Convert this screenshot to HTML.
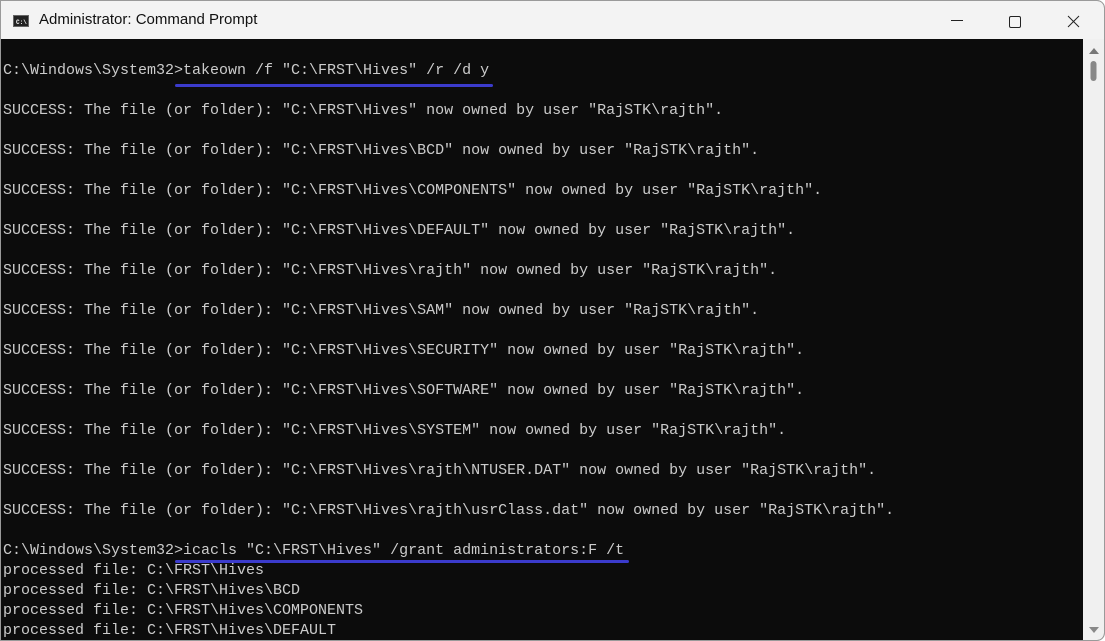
<!DOCTYPE html>
<html><head><style>
html,body{margin:0;padding:0;width:1105px;height:641px;overflow:hidden;background:#fff}
.win{position:absolute;left:0;top:0;width:1103px;height:639px;border:1px solid #9a9a9a;border-radius:0 8px 8px 0;background:#0c0c0c;overflow:hidden}
.title{position:absolute;left:0;top:0;width:1103px;height:38px;background:#f3f3f3}
.title span{position:absolute;left:38px;top:10px;font:15px "Liberation Sans",sans-serif;color:#111}
.icon{position:absolute;left:12px;top:14px;width:16px;height:12px;background:#222;border:1px solid #666;box-sizing:border-box}
.icon i{position:absolute;left:2px;top:3px;font:bold 6px "Liberation Mono",monospace;color:#fff;font-style:normal}
pre{position:absolute;left:2px;top:60px;margin:0;font:15px/20px "Liberation Mono",monospace;color:#cccccc}
.sb{position:absolute;left:1082px;top:38px;width:21px;height:601px;background:#f0f0f0}
.ul{position:absolute;height:3px;background:#3b3bcc;border-radius:2px}
</style></head><body>
<div class="win">
<div class="title"><div class="icon"><i>C:\</i></div><span>Administrator: Command Prompt</span>
<svg style="position:absolute;left:940px;top:10px" width="160" height="22">
<line x1="10" y1="9.5" x2="22" y2="9.5" stroke="#222" stroke-width="1"/>
<rect x="68.5" y="5.5" width="11" height="11" rx="1.5" fill="none" stroke="#222" stroke-width="1"/>
<line x1="127" y1="5" x2="138" y2="16" stroke="#222"/><line x1="138" y1="5" x2="127" y2="16" stroke="#222"/>
</svg></div>
<div class="sb">
<svg width="21" height="601"><path d="M6 15 L11 9 L16 15Z" fill="#777"/><rect x="7.5" y="22" width="6" height="20" rx="3" fill="#888"/><path d="M6 588 L11 594 L16 588Z" fill="#888"/></svg>
</div>
<pre>C:\Windows\System32&gt;takeown /f "C:\FRST\Hives" /r /d y

SUCCESS: The file (or folder): "C:\FRST\Hives" now owned by user "RajSTK\rajth".

SUCCESS: The file (or folder): "C:\FRST\Hives\BCD" now owned by user "RajSTK\rajth".

SUCCESS: The file (or folder): "C:\FRST\Hives\COMPONENTS" now owned by user "RajSTK\rajth".

SUCCESS: The file (or folder): "C:\FRST\Hives\DEFAULT" now owned by user "RajSTK\rajth".

SUCCESS: The file (or folder): "C:\FRST\Hives\rajth" now owned by user "RajSTK\rajth".

SUCCESS: The file (or folder): "C:\FRST\Hives\SAM" now owned by user "RajSTK\rajth".

SUCCESS: The file (or folder): "C:\FRST\Hives\SECURITY" now owned by user "RajSTK\rajth".

SUCCESS: The file (or folder): "C:\FRST\Hives\SOFTWARE" now owned by user "RajSTK\rajth".

SUCCESS: The file (or folder): "C:\FRST\Hives\SYSTEM" now owned by user "RajSTK\rajth".

SUCCESS: The file (or folder): "C:\FRST\Hives\rajth\NTUSER.DAT" now owned by user "RajSTK\rajth".

SUCCESS: The file (or folder): "C:\FRST\Hives\rajth\usrClass.dat" now owned by user "RajSTK\rajth".

C:\Windows\System32&gt;icacls "C:\FRST\Hives" /grant administrators:F /t
processed file: C:\FRST\Hives
processed file: C:\FRST\Hives\BCD
processed file: C:\FRST\Hives\COMPONENTS
processed file: C:\FRST\Hives\DEFAULT</pre>
<div class="ul" style="left:174px;top:83px;width:318px"></div>
<div class="ul" style="left:174px;top:559px;width:454px"></div>
</div>
</body></html>
